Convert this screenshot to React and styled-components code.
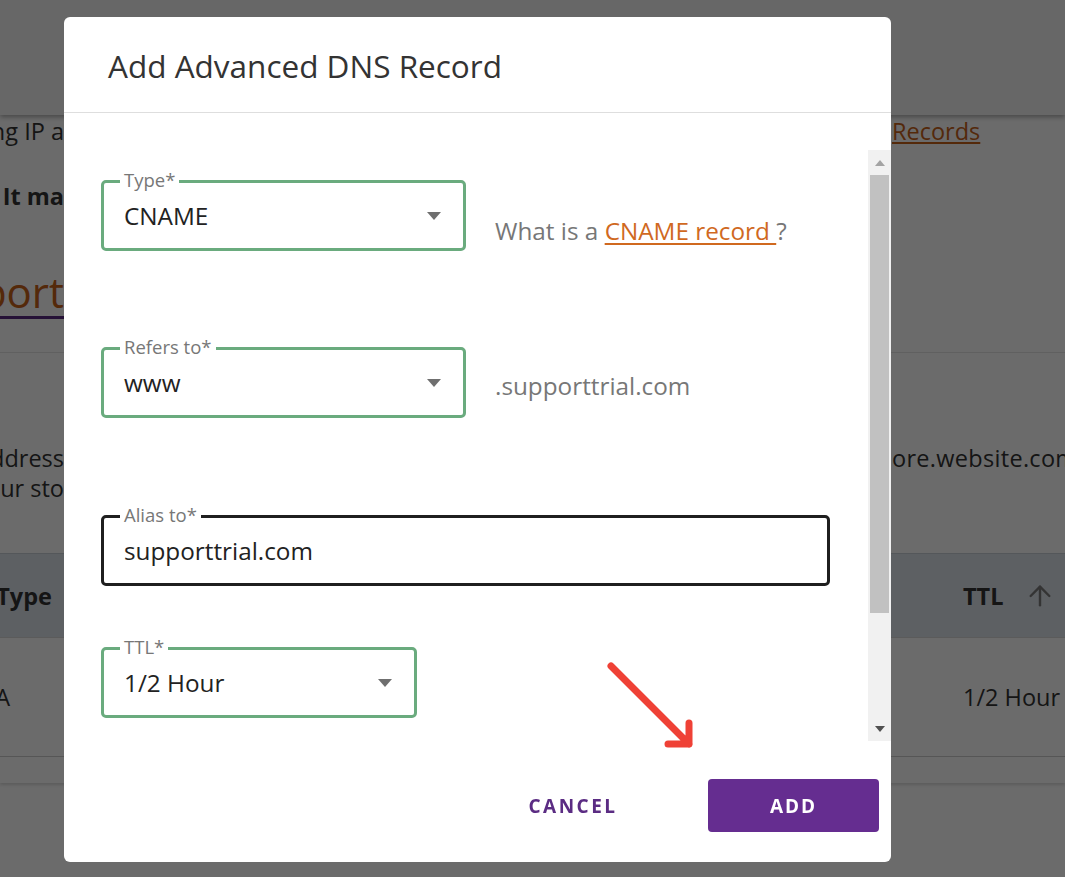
import styled, { createGlobalStyle } from "styled-components";
import { ArrowUp } from "lucide-react";

const GlobalStyle = createGlobalStyle`
  * { box-sizing: border-box; }
  html, body { margin: 0; padding: 0; }
  body {
    font-family: "Open Sans", "Noto Sans", "Liberation Sans", sans-serif;
    color: #333;
    background: #fff;
    overflow: hidden;
  }
`;

const Caret = () => (
  <svg width="14" height="8" viewBox="0 0 14 8">
    <path d="M0 0 L14 0 L7 8 Z" fill="#6f6f6f" />
  </svg>
);

const SelectField = ({ label, value, width }) => (
  <FieldBox $width={width}>
    <FieldLabel>{label}</FieldLabel>
    <FieldValue>{value}</FieldValue>
    <Caret />
  </FieldBox>
);

const TextField = ({ label, value }) => (
  <FieldBox $focused>
    <FieldLabel>{label}</FieldLabel>
    <FieldValue>{value}</FieldValue>
  </FieldBox>
);

const App = () => {
  return (
    <>
      <GlobalStyle />
      <Page>
        <TopBar />
        <BgRow $h={32}>
          <LeftCut>Pointing IP a</LeftCut>
          <RightCut>
            <BgLink>Records</BgLink>
          </RightCut>
        </BgRow>
        <BgRow $h={98}>
          <LeftCut $bold $pad={0}>It ma</LeftCut>
        </BgRow>
        <BgRow $h={92}>
          <LeftCut>
            <BigLink>Support</BigLink>
          </LeftCut>
        </BgRow>
        <BgRow $h={15} />
        <Section>
          <BgRow $h={90} />
          <BgRow $h={30}>
            <LeftCut>IP address</LeftCut>
            <RightCut $wide>ore.website.com</RightCut>
          </BgRow>
          <BgRow $h={30}>
            <LeftCut>your sto</LeftCut>
          </BgRow>
          <BgRow $h={50} />
          <TableHead>
            <LeftCut $bold $pad={12}>
              Type
            </LeftCut>
            <RightCut $bold $pad={71}>
              TTL
              <ArrowUp size={32} color="#7c7c7c" strokeWidth={1.8} />
            </RightCut>
          </TableHead>
          <TableRow>
            <LeftCut $pad={54}>A</LeftCut>
            <RightCut $pad={71}>1/2 Hour</RightCut>
          </TableRow>
          <TableFoot />
        </Section>
      </Page>

      <Overlay>
        <Modal>
          <ModalHeader>
            <Title>Add Advanced DNS Record</Title>
          </ModalHeader>
          <ModalBody>
            <FormArea>
              <FieldRow $gap={96}>
                <SelectField label="Type*" value="CNAME" width={365} />
                <Hint $offset={30}>
                  What is a <HintLink href="#">CNAME record </HintLink>?
                </Hint>
              </FieldRow>
              <FieldRow $gap={97}>
                <SelectField label="Refers to*" value="www" width={365} />
                <Hint $offset={5}>.supporttrial.com</Hint>
              </FieldRow>
              <FieldRow $gap={61}>
                <TextField label="Alias to*" value="supporttrial.com" />
              </FieldRow>
              <FieldRow $gap={0}>
                <SelectField label="TTL*" value="1/2 Hour" width={316} />
              </FieldRow>
            </FormArea>
            <Scrollbar>
              <ScrollButton>
                <svg width="10" height="6" viewBox="0 0 10 6">
                  <path d="M0 6 L5 0 L10 6 Z" fill="#a3a3a3" />
                </svg>
              </ScrollButton>
              <ScrollThumb />
              <ScrollSpace />
              <ScrollButton>
                <svg width="10" height="6" viewBox="0 0 10 6">
                  <path d="M0 0 L10 0 L5 6 Z" fill="#505050" />
                </svg>
              </ScrollButton>
            </Scrollbar>
          </ModalBody>
          <Footer>
            <CancelButton>CANCEL</CancelButton>
            <AddButton>ADD</AddButton>
          </Footer>
          <Pointer width="100" height="100" viewBox="0 0 100 100">
            <path
              d="M11 11 L89 89 M89 68 L89 89 L68 89"
              stroke="#ef4136"
              strokeWidth="7"
              strokeLinecap="round"
              strokeLinejoin="round"
              fill="none"
            />
          </Pointer>
        </Modal>
      </Overlay>
    </>
  );
};

/* background page */

const Page = styled.div`
  height: 877px;
  background: #fff;
  font-size: 23.5px;
  color: #333;
`;

const TopBar = styled.div`
  height: 115px;
  background: #f6f6f6;
  box-shadow: 0 2px 5px rgba(0, 0, 0, 0.35);
  position: relative;
`;

const BgRow = styled.div`
  display: flex;
  justify-content: space-between;
  align-items: center;
  height: ${(p) => p.$h}px;
`;

const LeftCut = styled.div`
  width: 64px;
  overflow: hidden;
  display: flex;
  justify-content: flex-end;
  white-space: nowrap;
  padding-right: ${(p) => p.$pad || 0}px;
  font-weight: ${(p) => (p.$bold ? 700 : 400)};
`;

const RightCut = styled.div`
  width: 173px;
  overflow: hidden;
  display: flex;
  align-items: center;
  gap: 20px;
  white-space: nowrap;
  padding-left: ${(p) => p.$pad || 0}px;
  font-weight: ${(p) => (p.$bold ? 700 : 400)};
  letter-spacing: ${(p) => (p.$wide ? "0.3px" : "normal")};
`;

const BgLink = styled.span`
  color: #c8621a;
  text-decoration: underline;
`;

const BigLink = styled.span`
  font-size: 42px;
  color: #c8621a;
  text-decoration: underline;
  text-decoration-color: #5b2c83;
  text-decoration-thickness: 3px;
  text-underline-offset: 8px;
`;

const Section = styled.div`
  border-top: 1px solid #e4e4e4;
`;

const TableHead = styled.div`
  display: flex;
  justify-content: space-between;
  align-items: center;
  height: 84px;
  background: #dde4ec;
  border-top: 1px solid #c9cfd6;
`;

const TableRow = styled.div`
  display: flex;
  justify-content: space-between;
  align-items: center;
  height: 120px;
  border-top: 1px solid #d8d8d8;
  border-bottom: 1px solid #cfcfcf;
`;

const TableFoot = styled.div`
  height: 26px;
  background: #fff;
  box-shadow: 0 2px 3px rgba(0, 0, 0, 0.15);
  position: relative;
`;

/* dialog */

const Overlay = styled.div`
  position: fixed;
  inset: 0;
  background: rgba(0, 0, 0, 0.58);
  padding: 17px 0 0 64px;
`;

const Modal = styled.div`
  position: relative;
  width: 827px;
  height: 845px;
  background: #fff;
  border-radius: 6px;
  display: flex;
  flex-direction: column;
`;

const ModalHeader = styled.div`
  height: 96px;
  border-bottom: 1px solid #dedede;
  display: flex;
  align-items: center;
  padding: 0 44px;
`;

const Title = styled.h2`
  margin: 0;
  font-size: 31.5px;
  font-weight: 400;
  color: #333;
  padding-top: 2px;
`;

const ModalBody = styled.div`
  display: flex;
  height: 591px;
  margin-top: 37px;
`;

const FormArea = styled.div`
  flex: 1;
  overflow: hidden;
  padding: 30px 38px 0 37px;
`;

const FieldRow = styled.div`
  display: flex;
  align-items: center;
  gap: 29px;
  margin-bottom: ${(p) => p.$gap}px;
`;

const FieldBox = styled.div`
  position: relative;
  flex: ${(p) => (p.$width ? "none" : 1)};
  width: ${(p) => (p.$width ? `${p.$width}px` : "auto")};
  height: 71px;
  border: 3px solid ${(p) => (p.$focused ? "#1f1f1f" : "#6aab7e")};
  border-radius: 5px;
  display: flex;
  align-items: center;
  justify-content: space-between;
  padding: 0 22px 0 20px;
`;

const FieldLabel = styled.span`
  position: absolute;
  top: -14px;
  left: 16px;
  padding: 0 4px;
  background: #fff;
  font-size: 18.5px;
  line-height: 22px;
  color: #777;
`;

const FieldValue = styled.span`
  font-size: 24.3px;
  color: #222;
`;

const Hint = styled.div`
  margin-top: ${(p) => p.$offset}px;
  font-size: 24.3px;
  color: #777;
`;

const HintLink = styled.a`
  color: #d0691f;
  text-decoration: underline;
  text-underline-offset: 3px;
`;

const Scrollbar = styled.div`
  width: 23px;
  background: #f1f1f1;
  display: flex;
  flex-direction: column;
`;

const ScrollButton = styled.div`
  height: 25px;
  display: flex;
  align-items: center;
  justify-content: center;
`;

const ScrollThumb = styled.div`
  height: 438px;
  margin: 0 2px;
  background: #c1c1c1;
`;

const ScrollSpace = styled.div`
  flex: 1;
`;

const Footer = styled.div`
  display: flex;
  justify-content: flex-end;
  align-items: center;
  gap: 62px;
  padding: 38px 12px 30px;
`;

const CancelButton = styled.button`
  width: 146px;
  height: 53px;
  border: none;
  background: none;
  font-family: inherit;
  font-size: 19px;
  font-weight: 700;
  letter-spacing: 2.5px;
  color: #5b2c83;
  cursor: pointer;
`;

const AddButton = styled.button`
  width: 171px;
  height: 53px;
  border: none;
  border-radius: 4px;
  background: #652d90;
  font-family: inherit;
  font-size: 19px;
  font-weight: 700;
  letter-spacing: 2px;
  color: #fff;
  cursor: pointer;
`;

const Pointer = styled.svg`
  position: absolute;
  left: 536px;
  top: 638px;
`;

export default App;
